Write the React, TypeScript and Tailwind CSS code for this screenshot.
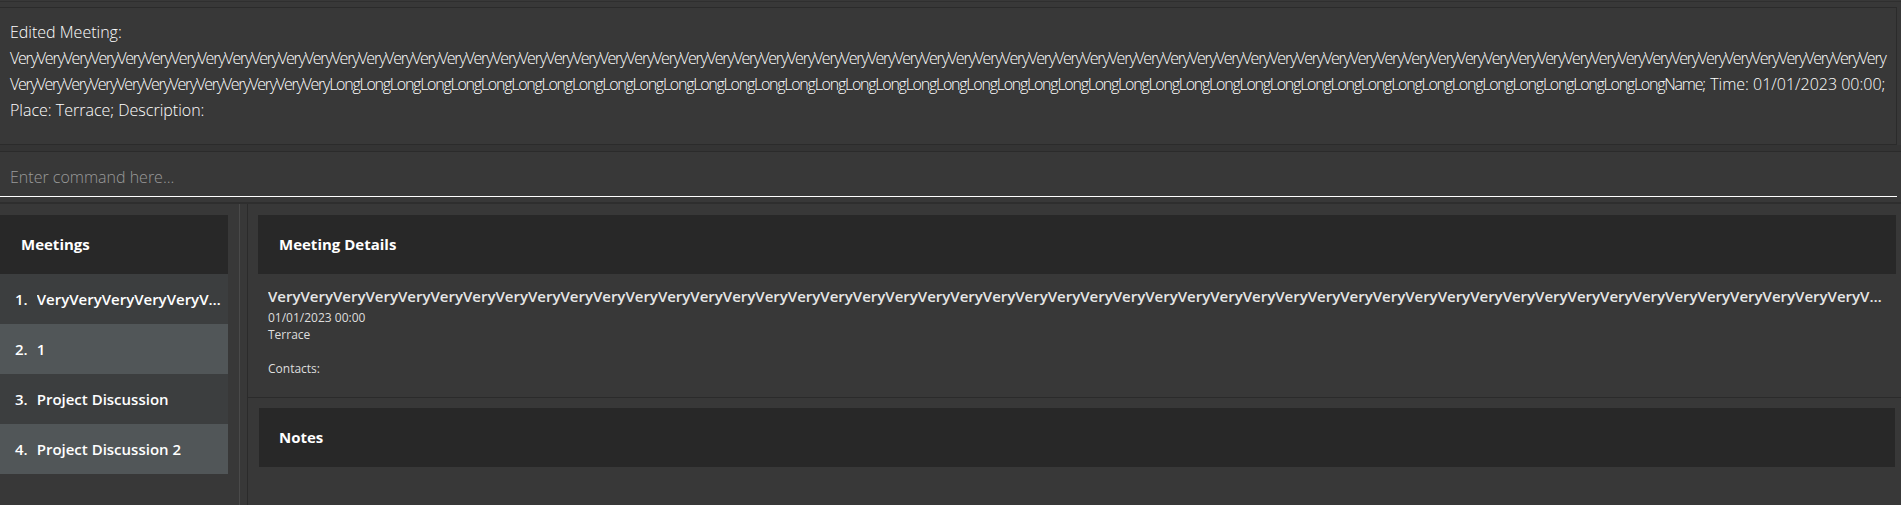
import React from "react";

const NAME = "Very".repeat(82) + "Long".repeat(44) + "Name";

const meetings = [NAME, "1", "Project Discussion", "Project Discussion 2"];

const PanelHeader = ({ title, className }: { title: string; className?: string }) => (
  <div className={"flex h-[59px] items-center bg-[#282828] text-[15px] font-bold text-white " + (className ?? "")}>
    {title}
  </div>
);

export default function App() {
  return (
    <div className="flex h-[505px] w-full flex-col overflow-hidden bg-[#383838] font-['Open_Sans',sans-serif]">
      {/* result display */}
      <div className="mt-px h-[6px] border-t border-[#2f2f2f]" />
      <div className="mr-[4px] h-[138px] border border-l-0 border-[#2b2b2b] pl-[10px] pt-[11px]">
        <div className="whitespace-nowrap text-[16px] font-light leading-[26px] text-white">
          <div>Edited Meeting:</div>
          <div className="tracking-[-1.2px]">{NAME.slice(0, 280)}</div>
          <div>
            <span className="tracking-[-1.25px]">{NAME.slice(280)}</span>; Time: 01/01/2023 00:00;
          </div>
          <div>Place: Terrace; Description:</div>
        </div>
      </div>
      <div className="h-[7px] border-b border-[#2b2b2b] bg-[#343434]" />

      {/* command box */}
      <input
        className="h-[45px] w-[1897px] border-b border-white bg-transparent pl-[10px] pt-[6px] text-[16px] font-light text-white outline-none placeholder:text-[#9a9a9a]"
        placeholder="Enter command here..."
      />
      <div className="h-[5px]" />
      <div className="h-[2px] bg-[#2e2e2e]" />

      <div className="flex flex-1">
        {/* meeting list */}
        <div className="w-[239px] pt-[11px]">
          <PanelHeader title="Meetings" className="w-[228px] pl-[21px]" />
          <div className="w-[228px]">
            {meetings.map((m, i) => (
              <div
                key={i}
                className={
                  "flex h-[50px] items-center gap-[9px] pl-[15px] pr-[2px] text-[15px] font-semibold text-white " +
                  (i % 2 === 0 ? "bg-[#3c3e3f]" : "bg-[#515658]")
                }
              >
                <span className="shrink-0">{i + 1}.</span>
                <span className="truncate">{m}</span>
              </div>
            ))}
          </div>
        </div>

        <div className="w-[9px] border-l border-r border-l-[#4a4a4a] border-r-[#2b2b2b]" />

        {/* details + notes */}
        <div className="flex min-w-0 flex-1 flex-col">
          <div className="h-[193px] pt-[11px]">
            <PanelHeader title="Meeting Details" className="ml-[10px] mr-[5px] pl-[21px]" />
            <div className="pl-[20px] pr-[18px] pt-[12px] text-[#dedede]">
              <div className="truncate text-[15px] font-semibold leading-[20px] text-[#e6e6e6]">{NAME}</div>
              <div className="mt-[3px] text-[12px] leading-[17px]">
                <div>01/01/2023 00:00</div>
                <div>Terrace</div>
                <div>&nbsp;</div>
                <div>Contacts:</div>
              </div>
            </div>
          </div>
          <div className="flex-1 border-t border-[#2b2b2b] pt-[10px]">
            <PanelHeader title="Notes" className="ml-[11px] mr-[6px] pl-[20px]" />
          </div>
        </div>
      </div>
    </div>
  );
}
